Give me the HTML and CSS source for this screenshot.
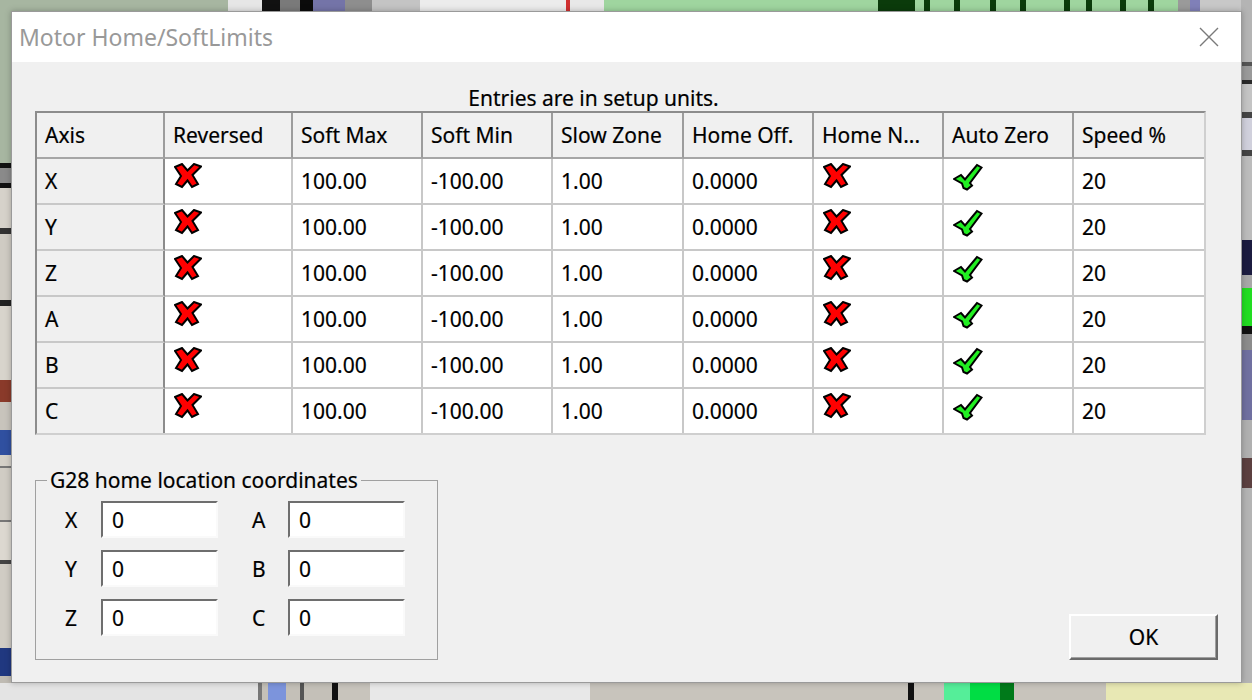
FILE: index.html
```html
<!DOCTYPE html>
<html lang="en">
<head>
    <meta charset="UTF-8">
    <title>Motor Home/SoftLimits</title>
    <link rel="stylesheet" href="styles.css">
</head>
<body>
    <svg class="defs" width="0" height="0">
        <symbol id="ico-no" viewBox="-1 -1 28 26">
            <polygon points="0,3 7,0 12.5,6.5 19,0 26,2.5 17.5,11 23,20 17,23 12.5,16.5 7,23 1,20 6,12" fill="#ff0000" stroke="#000" stroke-width="2" stroke-linejoin="miter"/>
        </symbol>
        <symbol id="ico-yes" viewBox="-1 -1 30 28">
            <polygon points="0,15 7,11 11,15.5 23,1 27.5,3.5 16,19 18,21.5 13,25.5 9.5,24 8,19.5" fill="#22ee22" stroke="#000" stroke-width="2" stroke-linejoin="miter"/>
        </symbol>
    </svg>

    <div class="desk">
        <!-- bits of the main screen peeking out behind the dialog -->
        <div class="strip strip-top"></div>
        <div class="strip strip-left"></div>
        <div class="strip strip-right"></div>
        <div class="strip strip-bottom"></div>

        <div class="dialog">
            <div class="titlebar">
                <span class="title">Motor Home/SoftLimits</span>
                <svg class="close" width="20" height="20" viewBox="0 0 20 20">
                    <path d="M1 1 L19 19 M19 1 L1 19" stroke="#7a7a7a" stroke-width="1.4" fill="none"/>
                </svg>
            </div>

            <div class="dlg-body">
                <div class="caption">Entries are in setup units.</div>

                <table class="limits">
                    <colgroup>
                        <col class="c-axis"><col class="c-rev"><col class="c-std"><col class="c-std">
                        <col class="c-wide"><col class="c-std"><col class="c-std"><col class="c-std"><col class="c-std">
                    </colgroup>
                    <thead>
                        <tr>
                            <th>Axis</th><th>Reversed</th><th>Soft Max</th><th>Soft Min</th><th>Slow Zone</th>
                            <th>Home Off.</th><th>Home N...</th><th>Auto Zero</th><th>Speed %</th>
                        </tr>
                    </thead>
                    <tbody id="axis-rows"></tbody>
                </table>

                <div class="bottom-row">
                    <fieldset class="g28">
                        <legend>G28 home location coordinates</legend>
                        <div class="coords">
                            <label class="lbl">X</label><input class="num" value="0">
                            <label class="lbl lbl-right">A</label><input class="num" value="0">
                            <label class="lbl">Y</label><input class="num" value="0">
                            <label class="lbl lbl-right">B</label><input class="num" value="0">
                            <label class="lbl">Z</label><input class="num" value="0">
                            <label class="lbl lbl-right">C</label><input class="num" value="0">
                        </div>
                    </fieldset>
                    <button class="ok">OK</button>
                </div>
            </div>
        </div>
    </div>

    <script>
        // one row per axis, all with the same defaults
        const axes = ['X', 'Y', 'Z', 'A', 'B', 'C'];
        const no = '<svg class="ico ico-no"><use href="#ico-no"/></svg>';
        const yes = '<svg class="ico ico-yes"><use href="#ico-yes"/></svg>';

        document.getElementById('axis-rows').innerHTML = axes.map(a => `
            <tr>
                <th>${a}</th>
                <td class="icon-cell">${no}</td>
                <td>100.00</td>
                <td>-100.00</td>
                <td>1.00</td>
                <td>0.0000</td>
                <td class="icon-cell">${no}</td>
                <td class="icon-cell">${yes}</td>
                <td>20</td>
            </tr>`).join('');
    </script>
</body>
</html>
```

FILE: styles.css
```css
body {
    margin: 0;
    font-family: "Noto Sans", "Open Sans", sans-serif;
    font-size: 21px;
    color: #000;
}
.defs {
    position: absolute;
}
.desk {
    position: relative;
    width: 1252px;
    height: 700px;
    overflow: hidden;
    background: #c9c6bf;
}
.strip {
    position: absolute;
}
.strip-top {
    left: 0;
    top: 0;
    width: 1252px;
    height: 11px;
    background: linear-gradient(90deg,
        #a7b6a1 0 228px, #e6e6e6 228px 262px, #111 262px 280px, #7a7a7a 280px 300px,
        #0b0b0b 300px 313px, #7474a8 313px 345px, #8e8e8e 345px 372px, #c4c4c4 372px 420px,
        #ececec 420px 566px, #d03030 566px 570px, #e8e8e8 570px 604px,
        #9fd59f 604px 878px, #0b3b0b 878px 915px, #9fd59f 915px 924px, #0b3b0b 924px 930px,
        #9fd59f 930px 954px, #0b3b0b 954px 960px, #9fd59f 960px 990px, #0b3b0b 990px 996px,
        #9fd59f 996px 1020px, #0b3b0b 1020px 1026px, #9fd59f 1026px 1064px, #0b3b0b 1064px 1070px,
        #9fd59f 1070px 1086px, #0b3b0b 1086px 1092px, #9fd59f 1092px 1120px, #0b3b0b 1120px 1126px,
        #9fd59f 1126px 1148px, #0b3b0b 1148px 1154px, #9fd59f 1154px 1178px,
        #9a9a9a 1178px 1190px, #8080b8 1190px 1200px, #c8c8c8 1200px 1252px);
}
.strip-left {
    left: 0;
    top: 0;
    width: 11px;
    height: 700px;
    background: linear-gradient(180deg,
        #a7b6a1 0 163px, #111 163px 168px, #8a8a8a 168px 183px, #111 183px 188px,
        #d6d2ca 188px 228px, #333 228px 234px, #cfcbc3 234px 300px, #222 300px 306px,
        #d8d4cc 306px 380px, #8a3a2a 380px 402px, #c8c4bc 402px 430px, #3050a0 430px 455px,
        #d4d0c8 455px 466px, #777 466px 468px, #d0ccc4 468px 520px, #777 520px 522px,
        #dcd8d0 522px 560px, #444 560px 564px, #d0ccc4 564px 648px, #203880 648px 676px,
        #bfbbb3 676px 700px);
}
.strip-right {
    left: 1241px;
    top: 0;
    width: 11px;
    height: 700px;
    background: linear-gradient(180deg,
        #b4b4b4 0 62px, #555 62px 66px, #9a9a9a 66px 80px, #2a2a2a 80px 84px, #c4c4c4 84px 112px,
        #444 112px 118px, #d0d0dc 118px 150px, #444 150px 156px, #bcbcbc 156px 240px,
        #1c1c40 240px 275px, #a8a8a8 275px 288px, #22dd22 288px 326px, #111 326px 334px,
        #8c8c8c 334px 350px, #7070a0 350px 420px, #b0b0b0 420px 458px, #5c4040 458px 488px,
        #b4b4b4 488px 683px, #c9c790 683px 700px);
}
.strip-bottom {
    left: 0;
    top: 683px;
    width: 1252px;
    height: 17px;
    background: linear-gradient(90deg,
        #e4e4e4 0 258px, #777 258px 262px, #c4c0b8 262px 268px, #7c94dc 268px 286px,
        #c4c0b8 286px 300px, #555 300px 304px, #c4c0b8 304px 332px, #111 332px 338px,
        #c8c4bc 338px 370px, #e8e8e8 370px 590px, #c8c4bc 590px 908px, #111 908px 914px,
        #c8c4bc 914px 944px, #55ee99 944px 970px, #00dd44 970px 1000px, #007a1a 1000px 1014px,
        #c8c4bc 1014px 1106px, #e8e8b4 1106px 1252px);
}

/* dialog window */
.dialog {
    position: absolute;
    left: 11px;
    top: 11px;
    width: 1231px;
    height: 672px;
    box-sizing: border-box;
    border: 1px solid #9a9a9a;
    background: #f0f0f0;
    box-shadow: 0 0 6px rgba(0, 0, 0, 0.25);
}
.titlebar {
    height: 50px;
    background: #fff;
    display: flex;
    align-items: center;
    justify-content: space-between;
    padding: 0 22px 0 7px;
}
.title {
    font-size: 23px;
    color: #999;
}
.dlg-body {
    padding: 24px 23px 0 23px;
    -webkit-text-stroke: 0.2px #000;
}
.caption {
    width: 1117px;
    text-align: center;
    line-height: 25px;
}

/* axis grid */
.limits {
    width: 1171px;
    table-layout: fixed;
    border-collapse: separate;
    border-spacing: 0;
    border: 2px solid;
    border-color: #8c8c8c #cfcfcf #cfcfcf #8c8c8c;
    background: #fff;
}
.c-axis { width: 128px; }
.c-rev { width: 128px; }
.c-std { width: 130px; }
.c-wide { width: 131px; }
.limits th,
.limits td {
    height: 44px;
    padding: 0 0 0 8px;
    text-align: left;
    font-weight: normal;
    white-space: nowrap;
    overflow: hidden;
    border-right: 2px solid #c8c8c8;
    border-bottom: 2px solid #c8c8c8;
}
.limits th {
    background: #f0f0f0;
}
.limits thead th {
    border-right-color: #9c9c9c;
    border-bottom-color: #a6a6a6;
}
.limits tbody th {
    border-right-color: #8c8c8c;
}
.limits tr > :last-child {
    border-right: none;
}
.limits tbody tr:last-child > * {
    border-bottom: none;
}
.limits td.icon-cell {
    height: 39px;
    vertical-align: top;
    padding-top: 4px;
    padding-left: 9px;
}
.ico {
    display: block;
}
.ico-no {
    width: 28px;
    height: 26px;
}
.ico-yes {
    width: 30px;
    height: 28px;
}

/* G28 group + OK */
.bottom-row {
    display: flex;
    justify-content: space-between;
    align-items: flex-end;
    margin-top: 32px;
}
.g28 {
    width: 403px;
    box-sizing: border-box;
    margin: 0;
    padding: 8px 0 23px 11px;
    border: 1px solid #a0a0a0;
}
.g28 legend {
    padding: 0 3px;
    line-height: 26px;
}
.coords {
    display: grid;
    grid-template-columns: 36px 117px 70px 118px;
    row-gap: 12px;
    align-items: center;
    padding-left: 18px;
}
.lbl-right {
    padding-left: 34px;
}
.num {
    width: 117px;
    height: 37px;
    box-sizing: border-box;
    margin: 0;
    padding: 0 0 0 9px;
    font: inherit;
    background: #fff;
    border: 2px solid;
    border-color: #6e6e6e #fafafa #fafafa #6e6e6e;
    outline: none;
}
.ok {
    width: 149px;
    height: 46px;
    margin: 0;
    font: inherit;
    background: #f0f0f0;
    border: 2px solid;
    border-color: #fff #6a6a6a #6a6a6a #fff;
    box-shadow: inset -1px -1px 0 #a0a0a0;
    padding: 0;
}
```
